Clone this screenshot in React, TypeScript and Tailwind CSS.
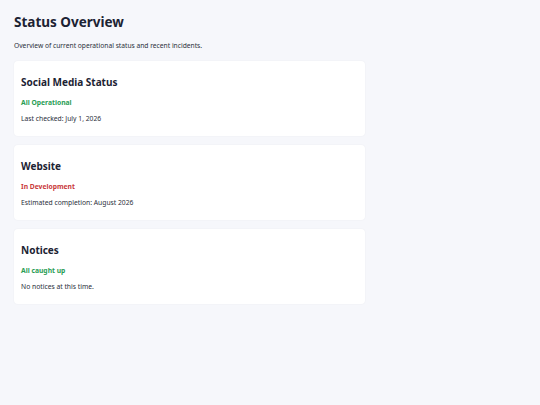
const cards = [
  {
    title: "Social Media Status",
    status: "All Operational",
    tone: "text-[#2a9d55]",
    note: "Last checked: July 1, 2026",
  },
  {
    title: "Website",
    status: "In Development",
    tone: "text-[#c93a3a]",
    note: "Estimated completion: August 2026",
  },
  {
    title: "Notices",
    status: "All caught up",
    tone: "text-[#2a9d55]",
    note: "No notices at this time.",
  },
];

const App = () => {
  return (
    <div className="min-h-screen bg-[#f6f7fb] px-[14px] pt-[12px] font-['Noto_Sans',sans-serif] text-[#1c2333]">
      <h1 className="text-[13.5px] font-bold leading-[20px]">Status Overview</h1>
      <p className="mt-[9px] text-[6.7px] leading-[10px] text-[#2a2f3a]">
        Overview of current operational status and recent incidents.
      </p>

      <div className="mt-[10px] flex w-[351px] flex-col gap-[9px]">
        {cards.map((card) => (
          <div
            key={card.title}
            className="h-[75px] rounded-[4px] bg-white px-[7px] pt-[14px] shadow-[0_0_2px_rgba(20,30,60,0.05)]"
          >
            <h2 className="text-[10px] font-bold leading-[14px]">{card.title}</h2>
            <p className={"mt-[9px] text-[6.75px] font-bold leading-[10px] " + card.tone}>
              {card.status}
            </p>
            <p className="mt-[6px] text-[6.75px] leading-[10px] text-[#2a2f3a]">{card.note}</p>
          </div>
        ))}
      </div>
    </div>
  );
};

export default App;
